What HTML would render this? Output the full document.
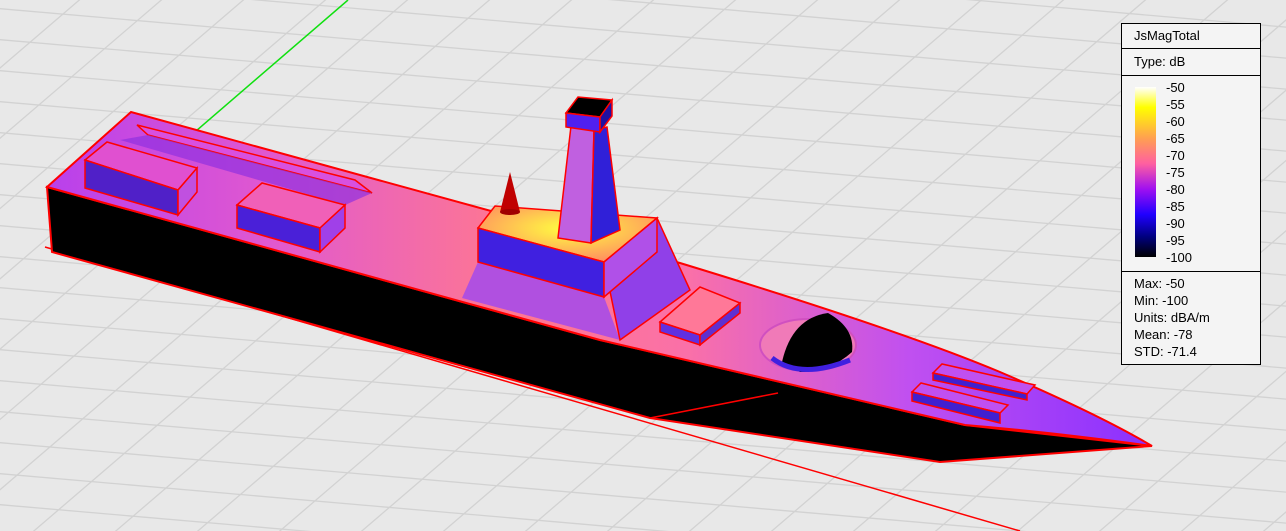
<!DOCTYPE html>
<html><head><meta charset="utf-8"><style>
html,body{margin:0;padding:0;background:#e8e8e8;width:1286px;height:531px;overflow:hidden;font-family:"Liberation Sans",sans-serif}
svg{display:block;overflow:hidden}
#lg{position:absolute;left:1121px;top:23px;width:138px;height:340px;border:1px solid #000;background:#f4f4f4;font-size:13px;color:#000;box-sizing:content-box}
.r{border-bottom:1px solid #000;padding-left:12px}
</style></head><body>
<svg id="s" width="1286" height="531" style="position:absolute;left:0;top:0">
<defs>
<linearGradient id="deck" x1="0" y1="0" x2="1" y2="0">
<stop offset="0" stop-color="#b840ec"/><stop offset="0.2" stop-color="#e058d0"/><stop offset="0.42" stop-color="#ff7890"/><stop offset="0.58" stop-color="#fa70a8"/><stop offset="0.78" stop-color="#c050f0"/><stop offset="1" stop-color="#8a30ff"/></linearGradient>
<radialGradient id="yel" cx="0.5" cy="0.4" r="0.6"><stop offset="0" stop-color="#ffff40"/><stop offset="1" stop-color="#ff9060"/></radialGradient>
</defs>
<g id="grid" stroke="#d2d2d2" stroke-width="1.3"></g>
<line x1="196" y1="131" x2="348" y2="0" stroke="#10e010" stroke-width="1.5"/>
<line x1="45" y1="247" x2="1020" y2="531" stroke="#ff0000" stroke-width="1.5"/>
<polygon points="47,187 52,252 650,418 940,462 1152,446 965,425 600,340" fill="#000" stroke="#f00" stroke-width="2"/>
<line x1="650" y1="418" x2="778" y2="393" stroke="#f00" stroke-width="1.5"/>
<path d="M47,187 L131,112 L680,263 Q900,330 1000,372 Q1100,415 1152,446 Q1050,432 965,425 L600,340 Z" fill="url(#deck)" stroke="#f00" stroke-width="2"/>
<polygon points="137,125 355,180 372,193 148,135" fill="#d850e0" stroke="#f00" stroke-width="1.5"/>
<polygon points="120,140 148,135 372,193 345,205" fill="#9030e0" opacity="0.7"/>
<polygon points="85,160 107,142 197,168 178,190" fill="#e050d0" stroke="#f00" stroke-width="1.5"/>
<polygon points="85,160 178,190 178,215 85,188" fill="#5020c8" stroke="#f00" stroke-width="1.5"/>
<polygon points="178,190 197,168 197,192 178,215" fill="#c050e0" stroke="#f00" stroke-width="1.5"/>
<polygon points="237,205 262,183 345,205 320,228" fill="#f060b8" stroke="#f00" stroke-width="1.5"/>
<polygon points="237,205 320,228 320,252 237,228" fill="#4a20d8" stroke="#f00" stroke-width="1.5"/>
<polygon points="320,228 345,205 345,228 320,252" fill="#a040e8" stroke="#f00" stroke-width="1.5"/>
<polygon points="478,262 604,297 620,340 462,298" fill="#b050e0"/>
<polygon points="604,262 657,218 690,290 620,340" fill="#9040e8" stroke="#f00" stroke-width="1.5"/>
<polygon points="478,228 495,206 657,218 604,262" fill="url(#yel)" stroke="#f00" stroke-width="1.5"/>
<polygon points="478,228 604,262 604,297 478,262" fill="#4020e0" stroke="#f00" stroke-width="1.5"/>
<polygon points="604,262 657,218 657,252 604,297" fill="#b050e8" stroke="#f00" stroke-width="1.5"/>
<polygon points="558,238 571,126 594,130 591,243" fill="#c060e0" stroke="#f00" stroke-width="1.5"/>
<polygon points="591,243 594,130 607,127 620,230" fill="#3020d8" stroke="#f00" stroke-width="1.5"/>
<polygon points="566,113 578,97 612,100 600,117" fill="#000" stroke="#f00" stroke-width="1.5"/>
<polygon points="566,113 600,117 600,132 566,127" fill="#5020f0" stroke="#f00" stroke-width="1.5"/>
<polygon points="600,117 612,100 612,116 600,132" fill="#2010a0" stroke="#f00" stroke-width="1.5"/>
<polygon points="510,172 500,212 520,212" fill="#c00000"/>
<ellipse cx="510" cy="212" rx="10" ry="3" fill="#a00000"/>
<polygon points="660,322 700,287 740,303 700,335" fill="#ff7898" stroke="#f00" stroke-width="1.5"/>
<polygon points="660,322 700,335 700,345 660,332" fill="#6030e0" stroke="#f00" stroke-width="1.5"/>
<polygon points="700,335 740,303 740,313 700,345" fill="#6030d0" stroke="#f00" stroke-width="1.5"/>
<ellipse cx="808" cy="345" rx="48" ry="26" fill="#f07ab8" stroke="#d050c0" stroke-width="2"/>
<path d="M782,362 Q792,318 828,313 Q855,328 852,352 Q830,372 800,372 Z" fill="#000"/>
<path d="M772,358 Q800,380 850,360" stroke="#4020e0" stroke-width="5" fill="none"/>
<polygon points="933,373 942,364 1035,385 1027,394" fill="#c050f0" stroke="#f00" stroke-width="1.5"/>
<polygon points="933,373 1027,394 1027,400 933,380" fill="#4020d0" stroke="#f00" stroke-width="1.5"/>
<polygon points="912,392 921,383 1008,405 1000,413" fill="#c050f0" stroke="#f00" stroke-width="1.5"/>
<polygon points="912,392 1000,413 1000,423 912,401" fill="#4020d0" stroke="#f00" stroke-width="1.5"/>
</svg>
<div id="lg">
<div class="r" style="height:24px;line-height:24px">JsMagTotal</div>
<div class="r" style="height:26px;line-height:26px">Type: dB</div>
<div class="r" style="height:195px;position:relative">
<div style="position:absolute;left:13px;top:11px;width:21px;height:170px;background:linear-gradient(#fff,#ff0 12%,#ffa050 30%,#ff60a0 45%,#a010f0 60%,#2000ff 75%,#000080 88%,#000)"></div>
<div style="position:absolute;left:44px;top:3px;line-height:17px;font-size:13px">-50<br>-55<br>-60<br>-65<br>-70<br>-75<br>-80<br>-85<br>-90<br>-95<br>-100</div>
</div>
<div style="padding-left:12px;padding-top:3px;line-height:17px">Max: -50<br>Min: -100<br>Units: dBA/m<br>Mean: -78<br>STD: -71.4</div>
</div>
<script>
var g=document.getElementById('grid'),h='';
for(var i=-40;i<40;i++){var y=i*31;h+='<line x1="-100" y1="'+y+'" x2="1400" y2="'+(y+130)+'"/>';}
for(var j=-10;j<30;j++){var x=j*82;h+='<line x1="'+x+'" y1="560" x2="'+(x+700)+'" y2="-40"/>';}
g.innerHTML=h;
</script>
</body></html>
